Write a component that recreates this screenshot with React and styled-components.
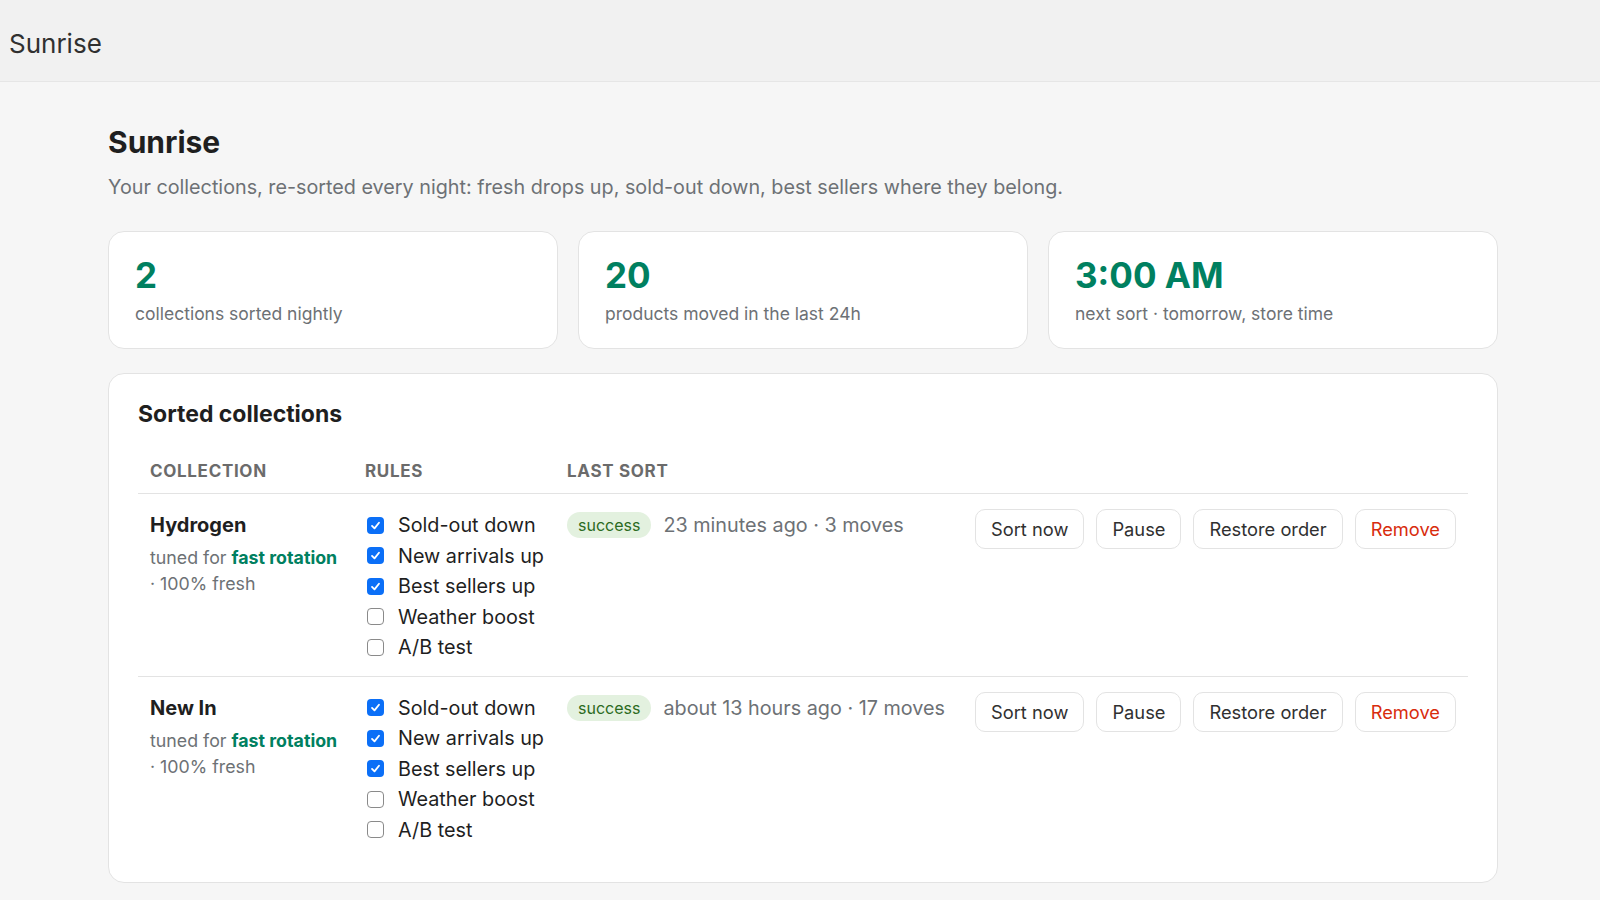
import React from 'react';
import styled, { createGlobalStyle } from 'styled-components';

const GlobalStyle = createGlobalStyle`
  * {
    box-sizing: border-box;
  }
  body {
    margin: 0;
    background: #f6f6f6;
    font-family: Inter, "Noto Sans", "Liberation Sans", sans-serif;
    color: #303030;
  }
`;

const TopBar = styled.header`
  height: 82px;
  display: flex;
  align-items: center;
  padding: 5px 0 0 9px;
  background: #f1f1f1;
  border-bottom: 1px solid #e6e6e6;
  font-size: 26px;
  color: #303030;
`;

const Main = styled.main`
  padding: 41px 102px 20px 108px;
`;

const Title = styled.h1`
  margin: 0 0 13px;
  font-size: 30px;
  line-height: 38px;
  font-weight: 700;
  color: #1f1f1f;
`;

const Subtitle = styled.p`
  margin: 0 0 30px;
  font-size: 19.75px;
  line-height: 27px;
  color: #6d7175;
`;

const Stats = styled.section`
  display: grid;
  grid-template-columns: repeat(3, 1fr);
  gap: 20px;
  margin-bottom: 24px;
`;

const StatCard = styled.div`
  background: #fff;
  border: 1px solid #e3e3e3;
  border-radius: 16px;
  padding: 22px 26px 22px;
`;

const StatValue = styled.div`
  font-size: 35px;
  line-height: 43px;
  font-weight: 700;
  color: #008060;
`;

const StatLabel = styled.div`
  margin-top: 5px;
  font-size: 17.5px;
  line-height: 24px;
  color: #6d7175;
`;

const Panel = styled.section`
  background: #fff;
  border: 1px solid #e3e3e3;
  border-radius: 16px;
  padding: 27px 29px 24px;
`;

const PanelTitle = styled.h2`
  margin: 0 0 21px;
  font-size: 23px;
  line-height: 26px;
  font-weight: 700;
  color: #1f1f1f;
`;

const Grid = styled.div`
  display: grid;
  grid-template-columns: 215px 202px 408px 1fr;
`;

const HeadCell = styled.div`
  padding: 13px 12px 11px;
  font-size: 17px;
  line-height: 21px;
  font-weight: 700;
  letter-spacing: 0.04em;
  text-transform: uppercase;
  color: #6b6b6b;
  border-bottom: 1px solid #e3e3e3;
`;

const Cell = styled.div`
  padding: 16px 12px 13px;
  border-bottom: ${(p) => (p.$last ? 'none' : '1px solid #e3e3e3')};
`;

const Name = styled.div`
  font-size: 20px;
  line-height: 30px;
  font-weight: 700;
  color: #1f1f1f;
`;

const Meta = styled.div`
  margin-top: 5px;
  font-size: 17.8px;
  line-height: 26px;
  color: #6d7175;

  strong {
    color: #008060;
    font-weight: 700;
  }
`;

const RuleList = styled.div`
  display: flex;
  flex-direction: column;
`;

const Rule = styled.label`
  display: flex;
  align-items: center;
  gap: 14px;
  height: 30.5px;
  padding-left: 2px;
  font-size: 19.8px;
  white-space: nowrap;
  color: #1f1f1f;
`;

const Box = styled.span`
  width: 17px;
  height: 17px;
  flex: none;
  display: flex;
  align-items: center;
  justify-content: center;
  border-radius: 4px;
  background: ${(p) => (p.$checked ? '#0b6ff7' : '#fff')};
  border: ${(p) => (p.$checked ? 'none' : '1.5px solid #8a8a8a')};
`;

const LastSort = styled.div`
  display: flex;
  align-items: center;
  gap: 12px;
  height: 30px;
  font-size: 19.8px;
  color: #6d7175;
  white-space: nowrap;
`;

const Badge = styled.span`
  display: inline-flex;
  align-items: center;
  height: 26px;
  padding: 0 11px;
  border-radius: 13px;
  background: #e3f1df;
  color: #2b6b22;
  font-size: 16px;
`;

const Actions = styled.div`
  display: flex;
  gap: 12px;
  margin-top: -1px;
`;

const Button = styled.button`
  height: 40px;
  padding: 0 15px;
  border: 1px solid #e3e3e3;
  border-radius: 10px;
  background: #fff;
  font-family: inherit;
  font-size: 18.3px;
  color: ${(p) => (p.$danger ? '#d82c0d' : '#303030')};
  cursor: pointer;
`;

const Check = () => (
  <svg width="11" height="11" viewBox="0 0 12 12" fill="none">
    <path d="M2.2 6.4 L4.9 9.1 L9.8 3" stroke="#fff" strokeWidth="2" strokeLinecap="round" strokeLinejoin="round" />
  </svg>
);

const ruleNames = ['Sold-out down', 'New arrivals up', 'Best sellers up', 'Weather boost', 'A/B test'];

const collections = [
  { name: 'Hydrogen', rules: [true, true, true, false, false], sort: '23 minutes ago · 3 moves' },
  { name: 'New In', rules: [true, true, true, false, false], sort: 'about 13 hours ago · 17 moves' },
];

const stats = [
  { value: '2', label: 'collections sorted nightly' },
  { value: '20', label: 'products moved in the last 24h' },
  { value: '3:00 AM', label: 'next sort · tomorrow, store time' },
];

export default function App() {
  return (
    <>
      <GlobalStyle />
      <TopBar>Sunrise</TopBar>
      <Main>
        <Title>Sunrise</Title>
        <Subtitle>
          Your collections, re-sorted every night: fresh drops up, sold-out down, best sellers where they belong.
        </Subtitle>
        <Stats>
          {stats.map((s) => (
            <StatCard key={s.label}>
              <StatValue>{s.value}</StatValue>
              <StatLabel>{s.label}</StatLabel>
            </StatCard>
          ))}
        </Stats>
        <Panel>
          <PanelTitle>Sorted collections</PanelTitle>
          <Grid>
            <HeadCell>Collection</HeadCell>
            <HeadCell>Rules</HeadCell>
            <HeadCell>Last sort</HeadCell>
            <HeadCell />
            {collections.map((c, i) => {
              const last = i === collections.length - 1;
              return (
                <React.Fragment key={c.name}>
                  <Cell $last={last}>
                    <Name>{c.name}</Name>
                    <Meta>
                      tuned for <strong>fast rotation</strong>
                      <br />· 100% fresh
                    </Meta>
                  </Cell>
                  <Cell $last={last}>
                    <RuleList>
                      {ruleNames.map((r, j) => (
                        <Rule key={r}>
                          <Box $checked={c.rules[j]}>{c.rules[j] && <Check />}</Box>
                          {r}
                        </Rule>
                      ))}
                    </RuleList>
                  </Cell>
                  <Cell $last={last}>
                    <LastSort>
                      <Badge>success</Badge>
                      {c.sort}
                    </LastSort>
                  </Cell>
                  <Cell $last={last}>
                    <Actions>
                      <Button>Sort now</Button>
                      <Button>Pause</Button>
                      <Button>Restore order</Button>
                      <Button $danger>Remove</Button>
                    </Actions>
                  </Cell>
                </React.Fragment>
              );
            })}
          </Grid>
        </Panel>
      </Main>
    </>
  );
}
